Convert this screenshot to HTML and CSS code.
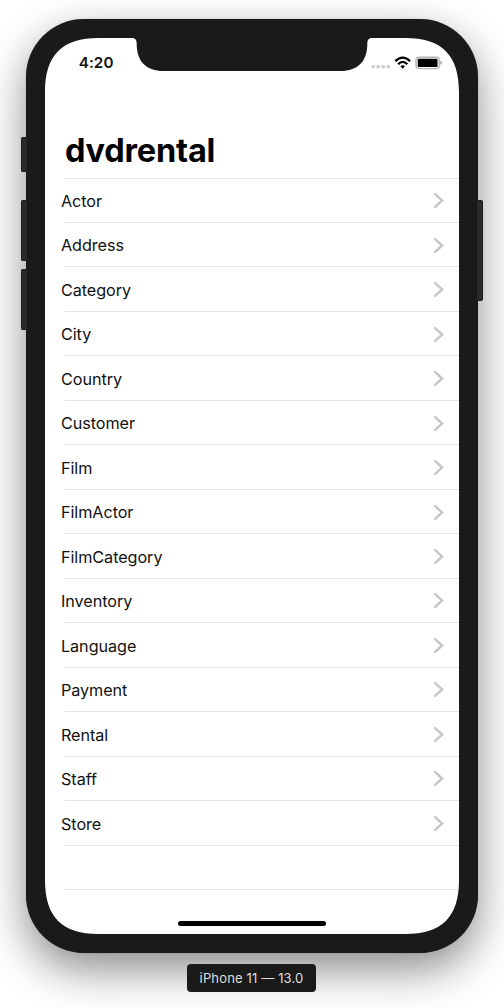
FILE: index.html
```html
<!DOCTYPE html>
<html lang="en">
<head>
<meta charset="utf-8">
<title>dvdrental</title>
<link rel="stylesheet" href="styles.css">
</head>
<body>
<svg width="0" height="0" class="defs"><symbol id="chevron" viewBox="0 0 12 18"><path d="M2.2 3.1 9.1 9.5 2.2 15.9" fill="none" stroke="#c7c7ca" stroke-width="2.4" stroke-linecap="round" stroke-linejoin="miter"/></symbol></svg>
<div class="device">
  <i class="button mute"></i><i class="button volume-up"></i><i class="button volume-down"></i><i class="button power"></i>
  <main class="screen">
    <header class="status">
      <span class="time">4:20</span>
      <span class="indicators">
        <svg width="72" height="16" viewBox="0 0 72 16">
          <g fill="#cfcfd0"><circle cx="3.2" cy="11.7" r="1.9"/><circle cx="8.2" cy="11.7" r="1.9"/><circle cx="13.2" cy="11.7" r="1.9"/><circle cx="18.2" cy="11.7" r="1.9"/></g>
          <g fill="none" stroke="#000" stroke-width="2.3"><path d="M25.3 6.1Q32.7-.9 40.1 6.1"/><path d="M28.1 9.2Q32.7 4.6 37.3 9.2"/></g>
          <path d="M30.4 11.2Q32.7 9.2 35 11.2L32.7 13.7Z"/>
          <rect x="46" y="2.2" width="23.2" height="11.4" rx="3" fill="#fff" stroke="#b5b5b5" stroke-width="1.4"/>
          <rect x="47.7" y="3.8" width="19.8" height="8.3" rx="1.2"/>
          <path d="M70.4 5.8Q72 6.4 72 7.8T70.4 9.8Z" fill="#999"/>
        </svg>
      </span>
    </header>
    <h1>dvdrental</h1>
    <ul class="list">
      <li><span>Actor</span><svg class="chevron"><use href="#chevron"/></svg></li>
      <li><span>Address</span><svg class="chevron"><use href="#chevron"/></svg></li>
      <li><span>Category</span><svg class="chevron"><use href="#chevron"/></svg></li>
      <li><span>City</span><svg class="chevron"><use href="#chevron"/></svg></li>
      <li><span>Country</span><svg class="chevron"><use href="#chevron"/></svg></li>
      <li><span>Customer</span><svg class="chevron"><use href="#chevron"/></svg></li>
      <li><span>Film</span><svg class="chevron"><use href="#chevron"/></svg></li>
      <li><span>FilmActor</span><svg class="chevron"><use href="#chevron"/></svg></li>
      <li><span>FilmCategory</span><svg class="chevron"><use href="#chevron"/></svg></li>
      <li><span>Inventory</span><svg class="chevron"><use href="#chevron"/></svg></li>
      <li><span>Language</span><svg class="chevron"><use href="#chevron"/></svg></li>
      <li><span>Payment</span><svg class="chevron"><use href="#chevron"/></svg></li>
      <li><span>Rental</span><svg class="chevron"><use href="#chevron"/></svg></li>
      <li><span>Staff</span><svg class="chevron"><use href="#chevron"/></svg></li>
      <li><span>Store</span><svg class="chevron"><use href="#chevron"/></svg></li>
      <li></li>
      <li></li>
    </ul>
    <i class="home"></i>
  </main>
</div>
<div class="caption">iPhone 11 — 13.0</div>
</body>
</html>
```
FILE: styles.css
```css
* { box-sizing: border-box; }
body {
  margin: 0;
  height: 1008px;
  padding-top: 19px;
  overflow: hidden;
  display: flex;
  flex-direction: column;
  align-items: center;
  background: #fff;
  font-family: Inter, "Liberation Sans", sans-serif;
}
.defs { position: absolute; }
.device {
  position: relative;
  flex: none;
  width: 452px;
  height: 934px;
  padding: 19px;
  border-radius: 58px;
  background: #1a1a1a;
  box-shadow: 0 0 1px rgba(0,0,0,.4), 0 17px 44px rgba(0,0,0,.45);
}
.button {
  position: absolute;
  left: -5px;
  width: 6px;
  border-radius: 2px 0 0 2px;
  background: #2a2a2a;
  border: 1px solid #1c1c1c;
  border-right: 0;
}
.mute { top: 118px; height: 35px; }
.volume-up { top: 181px; height: 61px; }
.volume-down { top: 250px; height: 61px; }
.power {
  left: auto;
  right: -5px;
  top: 181px;
  height: 101px;
  border: 1px solid #1c1c1c;
  border-left: 0;
  border-radius: 0 2px 2px 0;
}
.screen {
  position: relative;
  width: 414px;
  height: 896px;
  background: #fff;
  clip-path: path("M0 54C0 17 17 0 54 0H86C90.5 0 91.7 1.7 91.7 6C91.7 24 102 33 118 33H296C312 33 322.3 24 322.3 6C322.3 1.7 323.5 0 328 0H360C397 0 414 17 414 54V842C414 879 397 896 360 896H54C17 896 0 879 0 842Z");
}
.status {
  display: flex;
  justify-content: space-between;
  height: 44px;
  padding: 17px 17px 0 33.7px;
}
.time { font-size: 15.2px; font-weight: 600; line-height: 16px; letter-spacing: .1px; color: #111; }
.indicators svg { display: block; }
h1 {
  margin: 0;
  padding: 49px 0 0 20px;
  height: 95.53px;
  font-size: 32.5px;
  line-height: 40px;
  letter-spacing: -.2px;
  font-weight: 700;
  color: #000;
}
.list { list-style: none; margin: 0; padding: 0; }
.list li {
  display: flex;
  justify-content: space-between;
  align-items: center;
  height: 44.47px;
  margin-left: 20px;
  padding-right: 14.5px;
  border-top: 1px solid #e3e3e4;
  font-size: 16.2px;
  color: #111;
}
.list span { margin-left: -4px; padding-top: 1.4px; letter-spacing: -.06px; }
.chevron { width: 12px; height: 18px; }
.home {
  position: absolute;
  left: 133px;
  bottom: 8px;
  width: 148px;
  height: 5px;
  border-radius: 3px;
  background: #000;
}
.caption {
  position: relative;
  flex: none;
  left: -.5px;
  margin-top: 11px;
  width: 129px;
  height: 28px;
  border-radius: 4px;
  background: #1a1a1a;
  color: #dedede;
  text-align: center;
  font-size: 13px;
  line-height: 29px;
  letter-spacing: .15px;
}
```
